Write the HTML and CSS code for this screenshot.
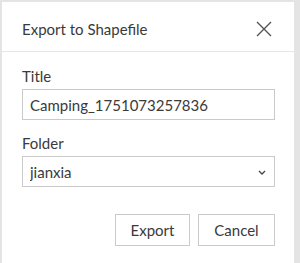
FILE: index.html
```html
<!DOCTYPE html>
<html lang="en">
<head>
  <meta charset="UTF-8">
  <title>Export to Shapefile</title>
  <link rel="stylesheet" href="styles.css">
</head>
<body>
  <div class="dialog">
    <div class="dialog-header">
      <h2>Export to Shapefile</h2>
      <button class="close-btn" aria-label="Close">
        <svg width="16" height="16" viewBox="0 0 16 16">
          <path d="M1 1 L15 15 M15 1 L1 15" stroke="#555" stroke-width="1.4" fill="none"/>
        </svg>
      </button>
    </div>
    <form class="dialog-body">
      <label for="title">Title</label>
      <input type="text" id="title" value="Camping_1751073257836">

      <label for="folder">Folder</label>
      <div class="select-wrap">
        <select id="folder">
          <option>jianxia</option>
        </select>
        <svg class="chevron" width="8" height="5" viewBox="0 0 8 5">
          <path d="M1 1 L4 4 L7 1" stroke="#444" stroke-width="1.3" fill="none"/>
        </svg>
      </div>

      <div class="actions">
        <button type="submit" class="btn">Export</button>
        <button type="button" class="btn">Cancel</button>
      </div>
    </form>
  </div>
</body>
</html>
```

FILE: styles.css
```css
body {
  margin: 0;
  padding: 2px 0 0 2px;
  background-color: #e4e4e4;
  font-family: Lato, "Open Sans", sans-serif;
  color: #3a3a3a;
  height: 261px;
  overflow: hidden;
}
.dialog {
  width: 292px;
  height: 270px;
  background: #ffffff;
}
.dialog-header {
  height: 49px;
  display: flex;
  align-items: center;
  justify-content: space-between;
  padding: 0 20px 0 20px;
  border-bottom: 1px solid #e6e6e6;
}
.dialog-header h2 {
  margin: 0;
  font-size: 15px;
  font-weight: normal;
  padding-top: 4px;
}
.close-btn {
  background: none;
  border: none;
  padding: 0;
  width: 16px;
  height: 16px;
  margin-top: 4px;
  margin-right: 2px;
  cursor: pointer;
}
.dialog-body {
  display: flex;
  flex-direction: column;
  padding: 14px 19px 0 20px;
}
label {
  font-size: 15px;
  line-height: 20px;
  margin-bottom: 3px;
}
input, select {
  font-family: inherit;
  font-size: 15px;
  color: #3a3a3a;
  height: 31px;
  box-sizing: border-box;
  border: 1px solid #cacaca;
  border-radius: 0;
  background: #fff;
  padding: 0 7px;
  margin: 0 0 13px 0;
}
.select-wrap {
  position: relative;
}
select {
  width: 100%;
  appearance: none;
  -webkit-appearance: none;
  margin-bottom: 0;
  height: 31px;
  padding: 0 7px;
}
.chevron {
  position: absolute;
  right: 9px;
  top: 14px;
}
.actions {
  display: flex;
  justify-content: flex-end;
  gap: 8px;
  margin-top: 27px;
}
.btn {
  font-family: inherit;
  font-size: 15px;
  color: #3a3a3a;
  background: #fff;
  border: 1px solid #cacaca;
  height: 32px;
  width: 75px;
  padding: 0;
  cursor: pointer;
}
.btn + .btn {
  width: 77px;
}
```
